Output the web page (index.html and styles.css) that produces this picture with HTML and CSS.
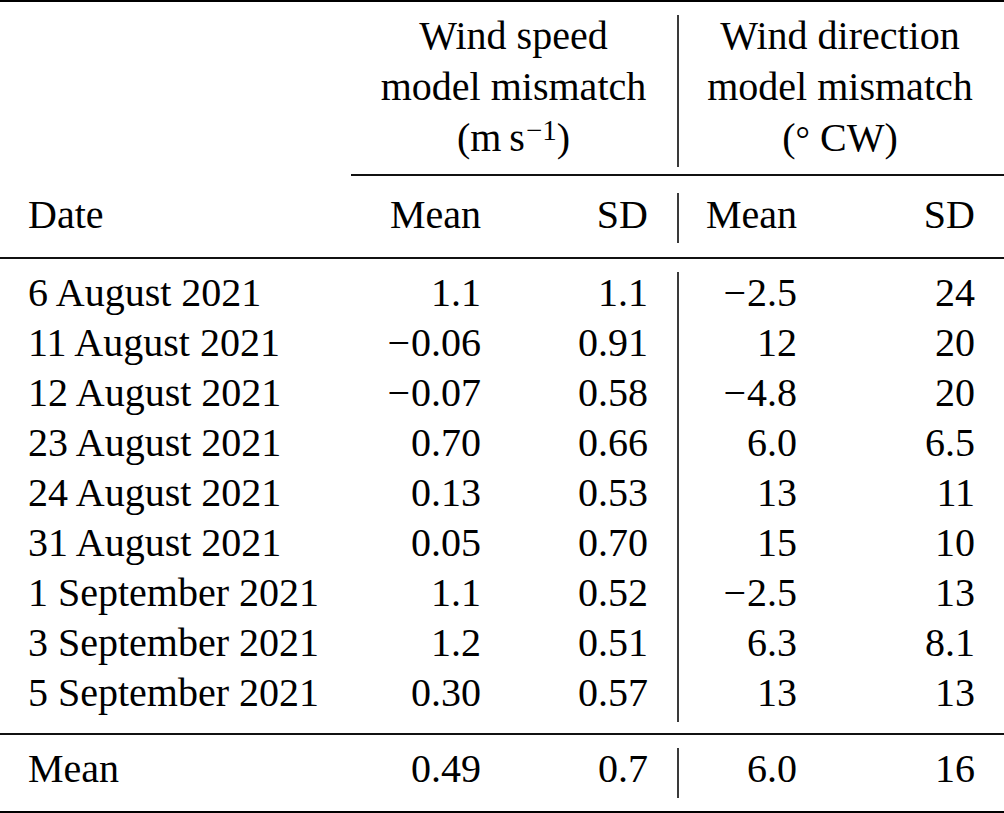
FILE: index.html
```html
<!DOCTYPE html>
<html lang="en">
<head>
<meta charset="utf-8">
<title>Wind model mismatch</title>
<link rel="stylesheet" href="styles.css">
</head>
<body>
<div class="table">
  <div class="grid group-head">
    <div class="cell"></div>
    <div class="cell group group-left"><div class="group-title">Wind speed<br>model mismatch<br>(m&#8201;s<span class="sup">−1</span>)</div></div>
    <div class="cell group group-right vline"><div class="group-title">Wind direction<br>model mismatch<br>(<span class="deg">°</span> CW)</div></div>
  </div>
  <div class="cmidrule"></div>
  <div class="grid col-head">
    <div class="cell c1">Date</div>
    <div class="cell c2">Mean</div>
    <div class="cell c3">SD</div>
    <div class="cell c4 vline">Mean</div>
    <div class="cell c5">SD</div>
  </div>
  <div class="grid body-rows">
    <div class="cell c1">6 August 2021</div><div class="cell c2">1.1</div><div class="cell c3">1.1</div><div class="cell c4 vline"><span class="neg">−</span>2.5</div><div class="cell c5">24</div>
    <div class="cell c1">11 August 2021</div><div class="cell c2"><span class="neg">−</span>0.06</div><div class="cell c3">0.91</div><div class="cell c4 vline">12</div><div class="cell c5">20</div>
    <div class="cell c1">12 August 2021</div><div class="cell c2"><span class="neg">−</span>0.07</div><div class="cell c3">0.58</div><div class="cell c4 vline"><span class="neg">−</span>4.8</div><div class="cell c5">20</div>
    <div class="cell c1">23 August 2021</div><div class="cell c2">0.70</div><div class="cell c3">0.66</div><div class="cell c4 vline">6.0</div><div class="cell c5">6.5</div>
    <div class="cell c1">24 August 2021</div><div class="cell c2">0.13</div><div class="cell c3">0.53</div><div class="cell c4 vline">13</div><div class="cell c5">11</div>
    <div class="cell c1">31 August 2021</div><div class="cell c2">0.05</div><div class="cell c3">0.70</div><div class="cell c4 vline">15</div><div class="cell c5">10</div>
    <div class="cell c1">1 September 2021</div><div class="cell c2">1.1</div><div class="cell c3">0.52</div><div class="cell c4 vline"><span class="neg">−</span>2.5</div><div class="cell c5">13</div>
    <div class="cell c1">3 September 2021</div><div class="cell c2">1.2</div><div class="cell c3">0.51</div><div class="cell c4 vline">6.3</div><div class="cell c5">8.1</div>
    <div class="cell c1">5 September 2021</div><div class="cell c2">0.30</div><div class="cell c3">0.57</div><div class="cell c4 vline">13</div><div class="cell c5">13</div>
  </div>
  <div class="grid mean-row">
    <div class="cell c1">Mean</div><div class="cell c2">0.49</div><div class="cell c3">0.7</div><div class="cell c4 vline">6.0</div><div class="cell c5">16</div>
  </div>
</div>
</body>
</html>
```
FILE: styles.css
```css
* { box-sizing: border-box; }
html, body { margin: 0; padding: 0; background: #fff; }
body {
  font-family: "Liberation Serif", "Times New Roman", serif;
  font-size: 40px;
  color: #000;
}
.table {
  width: 1004px;
  border-top: 2px solid #000;
  border-bottom: 2px solid #000;
}
.grid {
  display: grid;
  grid-template-columns: 351px 158px 168px 148px 179px;
}
.vline { border-left: 2px solid #3a3a3a; }

/* group headings */
.group-head { padding: 13px 0 7px; }
.group-head .cell { height: 152px; }
.group { text-align: center; line-height: 51px; white-space: nowrap; }
.group-left { grid-column: 2 / span 2; padding: 0 29px 0 28px; }
.group-right { grid-column: 4 / span 2; padding: 0 29px 0 26px; }
.group-title { margin-top: -4.7px; }
.sup { font-size: 29px; vertical-align: 11px; line-height: 0; margin-left: 1px; }
.deg { font-size: 36px; }

/* math minus: a touch wider than the text-font glyph */
.neg { letter-spacing: 1px; }

.cmidrule { margin-left: 351px; border-top: 2px solid #111; }

/* cells */
.cell { white-space: nowrap; }
.c1 { text-align: left; padding-left: 28px; }
.c2 { text-align: right; padding-right: 28px; }
.c3 { text-align: right; padding-right: 29px; }
.c4 { text-align: right; padding-right: 28px; }
.c5 { text-align: right; padding-right: 29px; }

.col-head { padding: 17px 0 14px; }
.col-head .cell { height: 50px; line-height: 43px; }

.body-rows { padding: 13px 0 11px; border-top: 2px solid #111; }
.body-rows .cell, .mean-row .cell { height: 50px; line-height: 41px; }

.mean-row { padding: 13px 0 13px; border-top: 2px solid #111; }
```
